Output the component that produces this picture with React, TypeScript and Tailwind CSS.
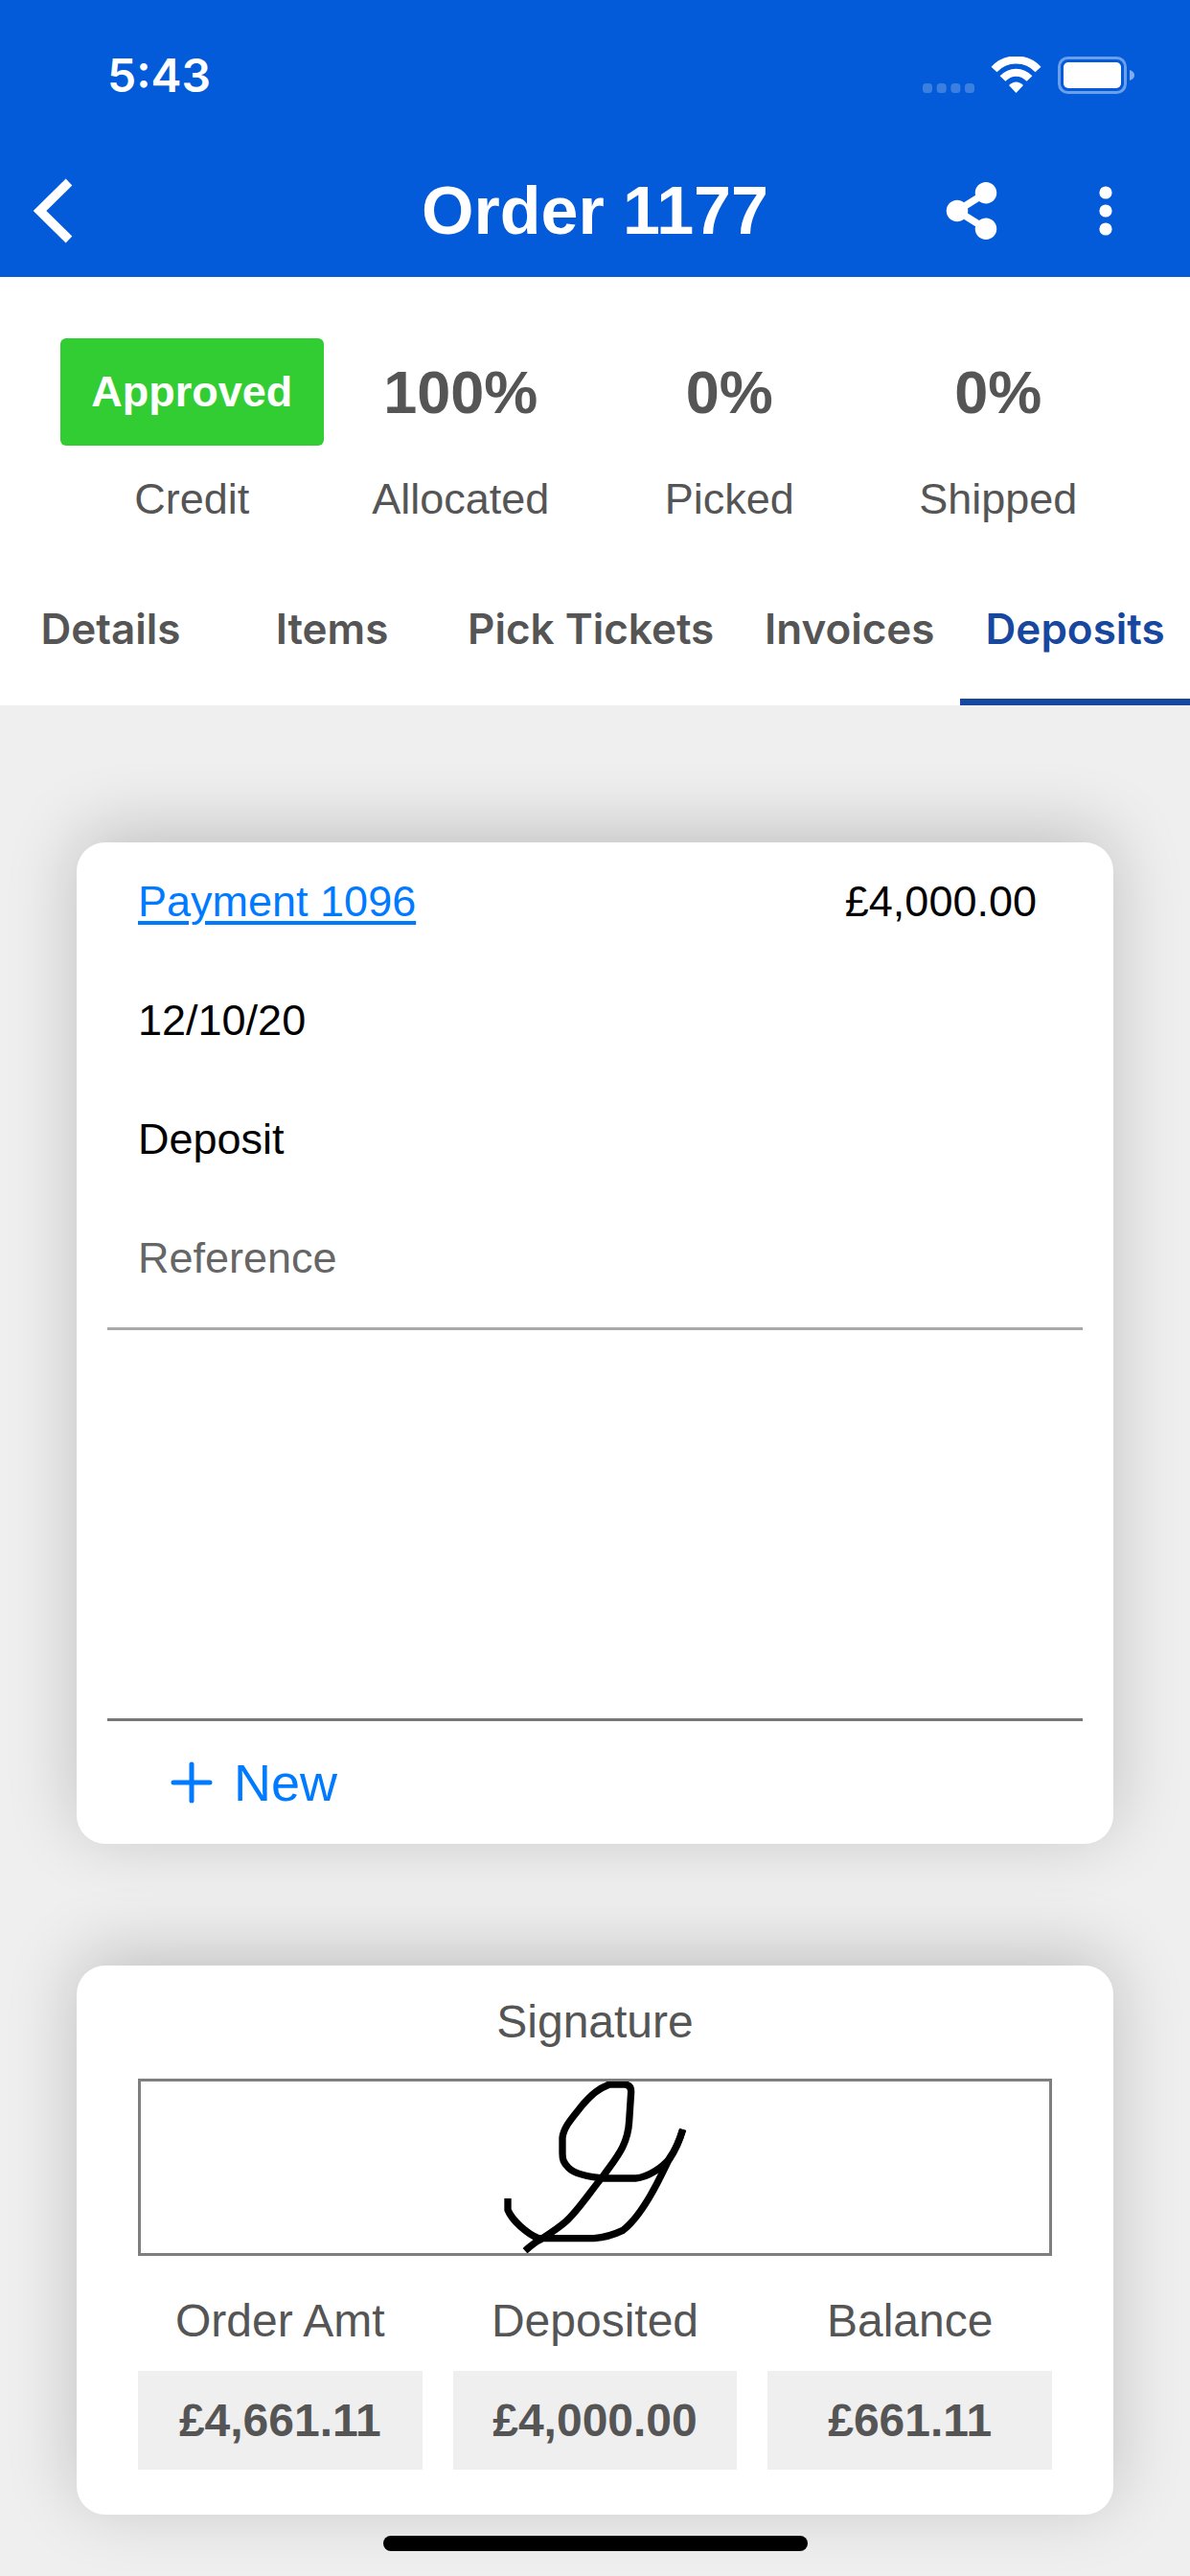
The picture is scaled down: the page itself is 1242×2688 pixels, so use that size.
import { FaShareAlt } from 'react-icons/fa';

const stats = [
  { label: 'Allocated', value: '100%' },
  { label: 'Picked', value: '0%' },
  { label: 'Shipped', value: '0%' },
];

const tabs = ['Details', 'Items', 'Pick Tickets', 'Invoices', 'Deposits'];

const totals = [
  { label: 'Order Amt', value: '£4,661.11' },
  { label: 'Deposited', value: '£4,000.00' },
  { label: 'Balance', value: '£661.11' },
];

const cardClass = 'rounded-[30px] bg-white shadow-[0_-11px_74px_rgba(0,0,0,0.2)]';

function StatusBar() {
  return (
    <div className="flex h-[150px] items-center justify-between pt-2 pr-[58px] pl-28">
      <span className="font-['Inter',sans-serif] text-[48px] font-semibold">5:43</span>
      <svg width="222" height="40" viewBox="0 0 222 40" fill="currentColor" aria-hidden="true">
        <g opacity="0.22">
          <rect x="1" y="28" width="10" height="10" rx="3.5" />
          <rect x="15.7" y="28" width="10" height="10" rx="3.5" />
          <rect x="30.4" y="28" width="10" height="10" rx="3.5" />
          <rect x="45" y="28" width="10" height="10" rx="3.5" />
        </g>
        <g fill="none" stroke="currentColor" strokeWidth="8">
          <path d="M75.5 13.5C87.5 0 109.500 0 121.5 13.5" />
          <path d="M84.5 23C92.5 14.5 104.5 14.5 112.5 23" />
        </g>
        <path d="M91 30C95.5 25.2 101.5 25.2 106 30L98.5 38Z" />
        <rect x="143.5" y="1.5" width="69" height="36" rx="9" fill="none" stroke="currentColor" strokeWidth="3" opacity="0.42" />
        <rect x="148" y="6" width="60" height="27" rx="5" />
        <path d="M217 14C220.5 15 222 17 222 19.5S220.5 24 217 25Z" opacity="0.5" />
      </svg>
    </div>
  );
}

function NavBar() {
  return (
    <div className="grid h-[139px] grid-cols-[1fr_auto_1fr] items-center px-[34px]">
      <button type="button" aria-label="Back" className="justify-self-start">
        <svg width="42" height="68" viewBox="0 0 42 68" fill="none" stroke="currentColor" strokeWidth="9.5">
          <path d="M38 4L7.5 34L38 64" />
        </svg>
      </button>
      <h1 className="text-[70px] leading-none font-bold">Order 1177</h1>
      <div className="flex items-center gap-14 justify-self-end">
        <button type="button" aria-label="Share">
          <FaShareAlt size={60} />
        </button>
        <button type="button" aria-label="More" className="px-8">
          <svg width="44" height="60" viewBox="0 0 44 60" fill="currentColor">
            <circle cx="22" cy="11" r="6.6" />
            <circle cx="22" cy="30" r="6.6" />
            <circle cx="22" cy="49" r="6.6" />
          </svg>
        </button>
      </div>
    </div>
  );
}

function Summary() {
  return (
    <section className="grid grid-cols-4 px-[60px] pt-16 text-center text-[45px]">
      <div>
        <div className="mx-[3px] flex h-28 items-center justify-center rounded-md bg-[#32cd32] font-bold text-white">
          Approved
        </div>
        <div className="mt-[26px] leading-[60px]">Credit</div>
      </div>
      {stats.map((stat) => (
        <div key={stat.label}>
          <div className="flex h-28 items-center justify-center text-[63px] font-bold">{stat.value}</div>
          <div className="mt-[26px] leading-[60px]">{stat.label}</div>
        </div>
      ))}
    </section>
  );
}

function Tabs() {
  return (
    <nav className="mt-[25px] flex font-['Inter',sans-serif] text-[44px] font-semibold">
      {tabs.map((tab) => (
        <button
          key={tab}
          type="button"
          className={
            tab === 'Deposits'
              ? 'h-40 min-w-[231px] grow border-y-[7px] border-t-transparent border-b-[#17479e] text-[#17479e]'
              : 'h-40 min-w-[231px] border-y-[7px] border-transparent px-[26px] whitespace-nowrap'
          }
        >
          {tab}
        </button>
      ))}
    </nav>
  );
}

function DepositsCard() {
  return (
    <section className={cardClass}>
      <div className="mx-8 min-h-[917px] border-b-[3px] border-[#777777] text-[45px] text-black">
        <div className="border-b-[3px] border-[#a9a9a9] pr-12 pb-2.5 pl-8">
          <div className="flex h-[124px] items-center justify-between">
            <a href="#payment-1096" className="text-[#007aff] underline decoration-4 underline-offset-[5px]">
              Payment 1096
            </a>
            <span>£4,000.00</span>
          </div>
          <div className="flex h-[124px] items-center">12/10/20</div>
          <div className="flex h-[124px] items-center">Deposit</div>
          <input
            type="text"
            aria-label="Reference"
            placeholder="Reference"
            className="block h-[124px] w-full outline-none placeholder:text-[#666666]"
          />
        </div>
      </div>
      <button type="button" className="ml-24 flex h-32 items-center gap-5 text-[54px] text-[#007aff]">
        <svg width="48" height="48" viewBox="0 0 48 48" stroke="currentColor" strokeWidth="5" strokeLinecap="round">
          <path d="M24 5V43M5 24H43" />
        </svg>
        New
      </button>
    </section>
  );
}

function SignatureCard() {
  return (
    <section className={`${cardClass} mt-[127px] px-16 pt-[31px] pb-[47px] text-center text-[48px] leading-[56px]`}>
      <h2>Signature</h2>
      <div className="mt-[31px] flex justify-center border-[3px] border-[#7f7f7f]">
        <svg
          width="200"
          height="179"
          viewBox="63 396 600 537"
          fill="none"
          stroke="#000000"
          strokeWidth="22"
          strokeLinejoin="round"
          role="img"
          aria-label="Customer signature"
        >
          <path d="M90 762V798C104 832 150 872 186 887H360C395 884 425 874 450 862C498 826 540 752 575 680L597 635C612 614 628 580 638 546" />
          <path d="M638 546C624 592 610 618 597 637C575 664 530 696 490 699H395C345 695 300 687 280 666C264 650 261 640 261 620V572C265 538 290 512 325 468C355 434 375 418 408 405H455C470 406 476 414 476 428L470 520C466 596 430 634 390 690C350 738 310 800 272 834C245 858 212 878 190 892C174 900 160 912 144 926" />
        </svg>
      </div>
      <dl className="mt-10 grid grid-cols-3 gap-8">
        {totals.map((total) => (
          <div key={total.label}>
            <dt>{total.label}</dt>
            <dd className="mt-6 flex h-[103px] items-center justify-center bg-[#efefef] font-bold">{total.value}</dd>
          </div>
        ))}
      </dl>
    </section>
  );
}

export default function App() {
  return (
    <div className="flex min-h-screen flex-col bg-[#efefef] font-['Liberation_Sans',Arial,sans-serif] text-[#555555]">
      <header className="bg-[#035bd9] text-white">
        <StatusBar />
        <NavBar />
      </header>
      <div className="bg-white">
        <Summary />
        <Tabs />
      </div>
      <main className="px-20 pt-[143px]">
        <DepositsCard />
        <SignatureCard />
      </main>
      {/* home indicator */}
      <div className="relative mx-auto mt-[22px] mb-[26px] h-4 w-[443px] rounded-full bg-black" />
    </div>
  );
}
